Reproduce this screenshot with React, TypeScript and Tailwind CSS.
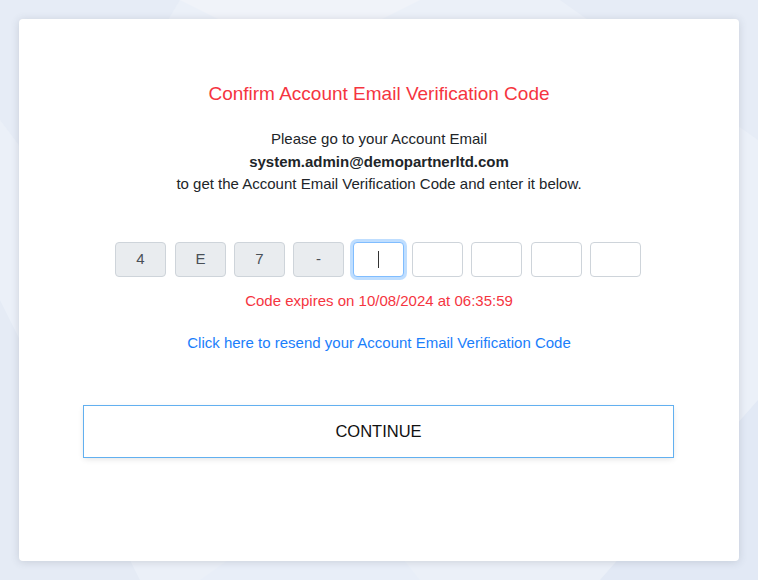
import React from "react";

const filled = ["4", "E", "7", "-"];
const gaps = ["ml-0", "ml-[9px]", "ml-[8px]", "ml-[8px]", "ml-[9px]", "ml-[8px]", "ml-[8px]", "ml-[9px]", "ml-[8px]"];

export default function App() {
  return (
    <div
      className="relative w-[758px] h-[580px] overflow-hidden bg-[#ebf0f8]"
      style={{ fontFamily: '"Liberation Sans", Arial, sans-serif' }}
    >
      <svg className="absolute inset-0" width="758" height="580" viewBox="0 0 758 580">
        <polygon points="0,0 180,0 60,200 0,120" fill="#e6ecf6" />
        <polygon points="180,0 420,0 300,60" fill="#f0f3f9" />
        <polygon points="560,0 758,0 758,140" fill="#e6ecf6" />
        <polygon points="0,300 0,580 140,580" fill="#e5ebf5" />
        <polygon points="600,580 758,400 758,580" fill="#e2e9f5" />
        <polygon points="200,580 340,480 420,580" fill="#e8eef8" />
      </svg>
      <div className="relative p-[19px] h-full">
        <div className="h-[542px] w-[720px] rounded-[4px] bg-white shadow-[0_1px_8px_rgba(60,70,90,0.18)] flex flex-col items-center pt-[63px]">
          <h1 className="text-[19px] leading-[23px] text-[#f5353f]">
            Confirm Account Email Verification Code
          </h1>
          <div className="mt-[23px] text-center text-[15px] leading-[22.5px] text-[#212529]">
            <p>Please go to your Account Email</p>
            <p className="font-bold">system.admin@demopartnerltd.com</p>
            <p>to get the Account Email Verification Code and enter it below.</p>
          </div>
          <div className="mt-[46.5px] flex self-start ml-[96px]">
            {filled.map((c, i) => (
              <div
                key={i}
                className={`${gaps[i]} w-[51px] h-[35px] rounded-[4px] border border-[#ced4da] bg-[#e9ecef] flex items-center justify-center text-[15px] text-[#495057]`}
              >
                {c}
              </div>
            ))}
            <div className="ml-[9px] w-[51px] h-[35px] rounded-[4px] border border-[#80bdff] bg-white shadow-[0_0_0_3px_rgba(0,123,255,0.25)] flex items-center justify-center">
              <div className="w-[1px] h-[17px] bg-[#333]" />
            </div>
            {[5, 6, 7, 8].map((i) => (
              <div
                key={i}
                className={`${gaps[i]} w-[51px] h-[35px] rounded-[4px] border border-[#ced4da] bg-white`}
              />
            ))}
          </div>
          <p className="mt-[13px] text-[15px] leading-[22.5px] text-[#f5353f]">
            Code expires on 10/08/2024 at 06:35:59
          </p>
          <a className="mt-[19.5px] text-[15px] leading-[22.5px] text-[#1a7efb] cursor-pointer">
            Click here to resend your Account Email Verification Code
          </a>
          <button className="mt-[51.5px] self-start ml-[65px] w-[589px] h-[51px] border-0 bg-white text-[16.5px] text-[#111] shadow-[0_0_0_1px_#62b0f0,0_2px_6px_rgba(0,0,0,0.12)]">
            CONTINUE
          </button>
        </div>
      </div>
    </div>
  );
}
